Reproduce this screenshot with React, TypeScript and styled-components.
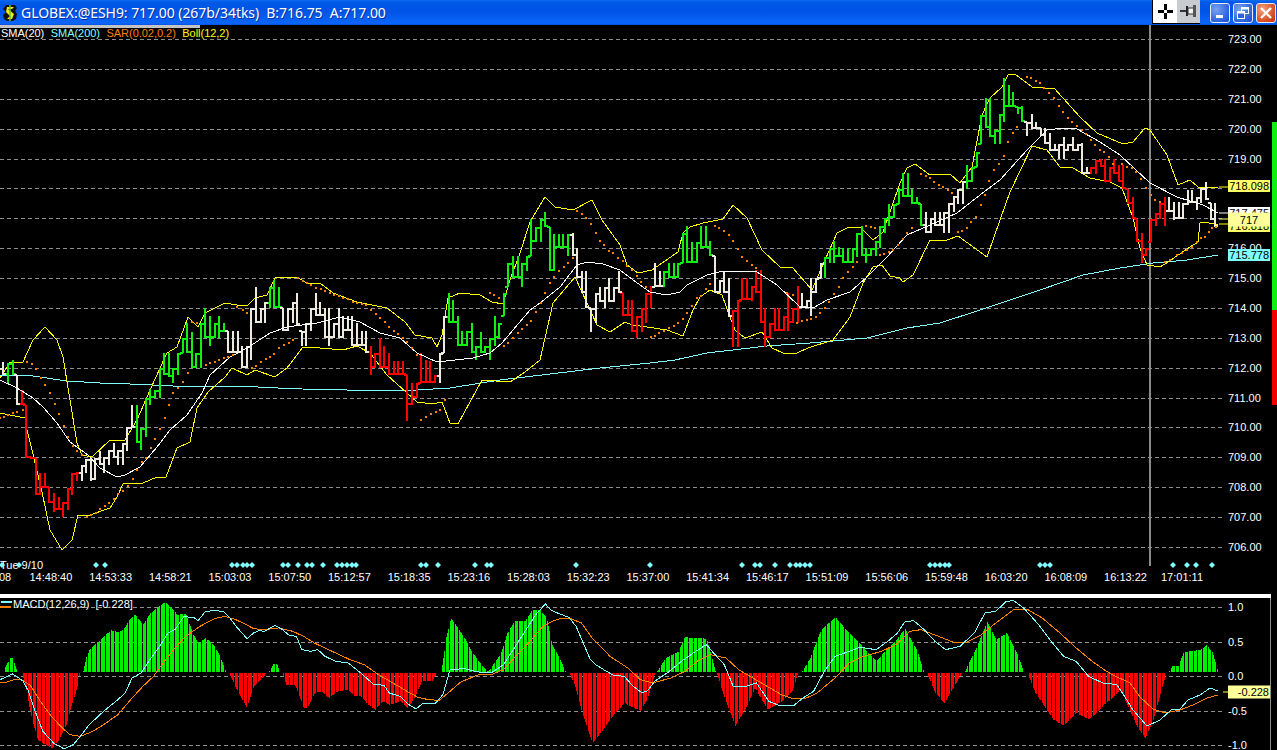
// App.tsx
import React from 'react';
import styled, { createGlobalStyle } from 'styled-components';

const GlobalStyle = createGlobalStyle`
    html, body {
        margin: 0;
        padding: 0;
        background: #000;
    }
    body {
        font-family: "Liberation Sans", Arial, sans-serif;
    }
`;

const Window = styled.div`
    width: 1277px;
    height: 750px;
    display: flex;
    flex-direction: column;
    overflow: hidden;
    background: #000;
`;

const TitleBar = styled.div`
    height: 25px;
    flex: none;
    display: flex;
    align-items: center;
    padding: 0 1px 0 3px;
    box-sizing: border-box;
    background: linear-gradient(#0a6cf0 0%, #0058e6 10%, #0054e8 45%, #0a64f8 88%, #0a66ff 93%, #0052e0 100%);
`;

const TitleText = styled.div`
    margin-left: 3px;
    flex: 1;
    color: #fff;
    font-family: "Noto Sans", sans-serif;
    font-size: 14px;
    letter-spacing: -0.05px;
    white-space: pre;
    text-shadow: 1px 1px 0 #0a2fa0;
`;

const ToolButton = styled.div<{ $on?: boolean }>`
    width: ${p => (p.$on ? 25 : 23)}px;
    height: 24px;
    align-self: flex-start;
    display: flex;
    align-items: center;
    justify-content: center;
    box-sizing: border-box;
    background: ${p => (p.$on ? '#fff' : '#c8ccd0')};
    border-left: ${p => (p.$on ? '1px solid #000' : 'none')};
    border-bottom: 1px solid #000;
`;

const WinButtons = styled.div`
    margin-left: 10px;
    display: flex;
    gap: 3px;
`;

const WinButton = styled.div<{ $close?: boolean }>`
    width: 20px;
    height: 20px;
    display: flex;
    align-items: center;
    justify-content: center;
    box-sizing: border-box;
    border: 1px solid #e8eefc;
    border-radius: 3px;
    background: ${p =>
        p.$close
            ? 'radial-gradient(circle at 30% 30%, #f0a080, #d84a20 70%, #c03010)'
            : 'radial-gradient(circle at 30% 30%, #7aa2f0, #2a62e0 70%, #1c48c8)'};
`;

const Pane = styled.div<{ $h: number }>`
    position: relative;
    height: ${p => p.$h}px;
    flex: none;
`;

const Sliver = styled.div`
    position: absolute;
    left: 0;
    top: 0;
    width: 200px;
    height: 3px;
    background: #c4c4c4;
`;

const Legend = styled.div`
    position: absolute;
    left: 1px;
    top: 1px;
    display: flex;
    gap: 6.5px;
    font-size: 11px;
    line-height: 14px;
    letter-spacing: -0.03px;
    white-space: pre;
`;

const LegendItem = styled.span<{ $color: string }>`
    color: ${p => p.$color};
`;

const MacdLegend = styled.div`
    position: absolute;
    left: 0;
    top: -1px;
    display: flex;
    align-items: center;
    gap: 1px;
    font-size: 11px;
    line-height: 14px;
    color: #fff;
    white-space: pre;
`;

const Separator = styled.div`
    height: 4px;
    flex: none;
    margin-right: 6px;
    background: #fff;
`;

const Chart = styled.svg`
    display: block;
    position: absolute;
    left: 0;
    top: 0;
`;

const AxisText = styled.text<{ $fill?: string }>`
    font-family: "Liberation Sans", Arial, sans-serif;
    font-size: 11px;
    fill: ${p => p.$fill || '#fff'};
`;

const priceY = (p: number) => 39 + (723 - p) * 29.88;
const barX = (i: number) => Math.round(-1.1 + 4.59 * i);

type Tone = 'red' | 'green' | 'white';

const toneColor: Record<Tone, string> = {
    red: '#ff0000',
    green: '#10f010',
    white: '#eeeadf',
};

// runs of high/low pixel pairs, one pair per bar
const barRuns: [Tone, string][] = [
    ['red', '368,398'],
    ['white', '362,375'],
    ['green', '363,383 360,375'],
    ['white', '375,405'],
    ['red', '390,405 405,458 457,459 458,495 473,495 473,488 487,503 493,512 497,510 502,517 488,510 473,495 472,481'],
    ['white', '465,481 459,473 458,481 458,480 451,465 457,473 450,465 443,458 450,465 443,465 427,451 405,428'],
    ['green', '405,443 428,450 398,437 389,405 390,398 368,398 353,375 353,377 368,383 353,375 338,353 323,353 332,368 353,368 323,368 308,338 316,346 323,338 316,338 323,332'],
    ['white', '331,353 331,353 331,353 346,368 346,368 308,360 287,323 308,323 302,323'],
    ['green', '287,308 280,308 287,308'],
    ['white', '308,331 308,331 302,323 293,325 331,346 323,346 308,331 293,316 302,316 308,338 308,346 323,338 308,338 316,338 316,331 316,346 323,346 331,346 331,353'],
    ['red', '346,375 353,368 338,368 346,368 353,375 361,375 361,375 361,375 375,421 383,405 383,398 353,383 360,383 361,383 375,383'],
    ['white', '353,383 316,353'],
    ['green', '293,323 300,323 316,346 331,346 331,346 323,353 346,360 332,353 346,353 338,360 316,346 323,338 293,316 263,287 256,278 256,278 263,287 256,271 219,256 227,242 219,242 212,227 227,271 234,271 234,248 234,248 234,256'],
    ['white', '233,256 248,278 271,293 271,308 308,332 293,323 287,302 287,308 278,302 287,302 271,293'],
    ['red', '293,316 300,316 300,332 316,338 308,332 293,323 286,308'],
    ['white', '263,287 271,287'],
    ['green', '271,287 263,278 263,278 263,278 233,263 226,263 242,263 242,263 226,248 226,248 241,256'],
    ['white', '256,293 280,293 271,293 278,317'],
    ['red', '310,347 300,347 278,300 278,300 286,301 270,293 270,323 308,347 323,338 308,331 308,331 316,331 293,331 308,323 286,323'],
    ['white', '293,308 300,308 278,316 278,293 263,278'],
    ['green', '257,278 248,263 241,263 247,257 248,263 248,263 248,263 233,257 226,256 248,263 248,256 241,256 226,248 218,233 204,226 204,218 189,204 173,197 173,197 189,204 197,204 204,226'],
    ['white', '212,233 218,233 212,226 212,226 212,233 203,233 196,212 189,204 181,204'],
    ['green', '165,189 167,182 152,167 115,144 98,128 98,137 130,144 114,144 78,122 85,107 92,107 107,114 106,122'],
    ['white', '122,136 114,129 122,129 128,136 128,144 133,151 144,151 144,159 137,159 144,151 137,151 144,151 143,174 167,174'],
    ['red', '167,174 160,174 159,167 159,182 167,182 159,174 165,182 165,189 189,204 197,219 219,242 233,263 248,256 219,242 213,226 203,219 197,226'],
    ['white', '197,212 202,220 202,219 203,219 190,205 190,203 197,210 188,203 182,200 203,220 203,227'],
];

const bars = barRuns.flatMap(([tone, list]) =>
    list.split(' ').map(pair => {
        const [top, bottom] = pair.split(',').map(Number);
        return { tone, top, bottom };
    })
);

// close sits where this bar overlaps the next one, open is the previous close
const closes = bars.map((b, i) => {
    const next = bars[i + 1] || b;
    const lo = Math.max(b.top, next.top);
    const hi = Math.min(b.bottom, next.bottom);
    if (lo <= hi) return Math.round(next.top < b.top ? lo + 1 : hi - 1);
    return next.top > b.bottom ? b.bottom - 1 : b.top + 1;
});

const barPath = (tone: Tone) =>
    bars
        .map((b, i) => {
            if (b.tone !== tone) return '';
            const x = barX(i);
            const open = i > 0 ? Math.min(Math.max(closes[i - 1], b.top), b.bottom) : b.top;
            return `M${x} ${b.top}V${b.bottom}M${x - 3} ${open}H${x}M${x} ${closes[i]}H${x + 3}`;
        })
        .join('');

const sma200 = '0,375 33,376 67,381 100,383 130,384 173,386 237,386 278,388 302,389 347,390 417,390 450,388 500,380 550,374 600,368 650,363 675,360 707,353 767,346 810,343 867,338 907,328 940,323 980,310 1040,290 1083,275 1120,268 1153,263 1187,260 1218,255';

const sma20 = '0,380 17,388 33,398 43,407 57,423 70,442 88,455 100,468 117,477 125,475 140,467 157,447 170,430 187,415 202,393 210,375 230,357 247,348 270,333 287,327 317,323 340,317 360,322 380,333 400,338 417,353 437,362 473,358 490,353 502,343 530,310 540,303 560,287 577,265 587,262 603,264 620,270 633,280 650,292 667,295 680,292 687,285 707,275 723,271 757,272 777,285 800,307 813,308 827,300 850,292 867,277 887,257 907,235 930,225 957,213 980,195 1000,180 1027,150 1047,130 1063,128 1077,129 1100,142 1120,155 1150,183 1177,197 1203,205 1218,213';

const bollUpper = '0,378 10,362 23,362 33,340 45,327 57,340 63,357 77,443 82,455 92,457 110,440 125,440 137,420 147,397 160,368 167,353 177,347 188,317 198,327 205,313 225,303 237,305 248,305 255,298 267,295 275,278 280,277 297,277 307,283 320,283 333,293 357,302 387,308 405,322 415,335 432,338 437,347 442,335 448,298 460,293 480,295 492,302 503,304 510,280 520,253 530,222 545,197 555,207 573,210 592,200 602,220 620,245 627,265 638,273 652,270 678,252 683,233 690,227 703,223 723,219 733,205 747,218 762,250 780,267 792,267 812,290 825,260 837,233 847,228 860,227 873,240 883,232 900,183 907,168 915,164 930,175 950,174 960,183 972,167 982,115 990,98 1002,87 1008,75 1015,74 1032,87 1043,88 1054,88 1080,117 1097,133 1123,144 1133,142 1145,128 1150,130 1167,155 1178,185 1190,180 1198,187 1218,187';

const bollLower = '0,413 25,418 27,430 32,450 42,492 50,530 62,550 72,540 78,515 90,515 110,508 117,497 123,484 143,483 157,477 166,477 177,448 190,442 197,408 208,392 225,377 232,368 247,375 255,370 275,377 287,368 303,347 320,348 343,350 357,346 370,353 387,375 407,393 417,402 432,404 442,402 450,423 458,424 470,402 482,380 510,382 525,372 540,360 553,303 575,277 587,303 597,325 610,332 625,322 632,325 647,327 667,330 683,336 693,310 700,297 710,290 722,295 730,317 735,330 745,338 762,332 772,348 783,353 797,353 808,348 833,340 850,317 863,283 873,267 882,265 890,276 900,278 903,282 913,275 930,240 947,240 958,236 987,257 1000,220 1010,192 1032,146 1047,150 1060,167 1073,168 1090,178 1110,182 1122,188 1133,218 1140,248 1147,265 1160,267 1168,262 1190,247 1198,242 1200,223 1205,222 1218,225';

const sarDots = '0,418 4,417 8,415 13,413 17,412 23,410 27,362 32,364 36,369 41,378 45,385 50,393 55,404 59,414 64,426 68,437 73,446 77,451 82,455 87,517 91,515 96,513 100,509 105,506 109,503 114,499 118,494 123,491 128,486 133,479 137,470 142,462 146,458 151,448 155,439 160,429 165,418 169,405 173,393 178,388 183,382 188,373 192,322 197,323 206,365 210,363 215,362 219,360 224,358 228,357 233,355 237,307 243,310 247,313 252,368 256,366 261,362 266,359 270,357 274,354 279,348 284,345 289,343 293,340 298,278 303,281 307,283 311,285 316,288 321,289 325,291 330,293 334,295 339,296 343,298 348,299 353,302 357,303 362,304 366,305 371,310 376,314 380,318 385,322 389,327 394,331 398,334 403,338 407,342 412,348 417,355 421,420 426,417 431,414 436,412 440,410 445,400 490,293 494,295 499,298 504,346 508,343 513,338 518,333 522,329 527,325 531,321 536,312 541,303 545,293 550,283 554,277 559,271 564,267 568,263 573,258 577,211 582,214 586,218 591,224 596,233 600,241 604,245 609,251 613,253 618,258 623,261 627,266 632,270 637,276 641,282 646,287 651,337 655,336 659,333 664,331 669,328 674,326 678,323 683,319 687,313 692,306 697,298 701,296 706,289 710,284 715,226 719,228 724,231 729,235 733,241 738,249 742,257 747,261 752,265 756,268 787,293 793,295 797,323 802,321 807,320 811,319 816,317 820,313 825,308 829,302 834,294 839,287 843,278 848,272 853,267 857,262 866,226 871,227 875,228 880,255 884,254 889,252 893,250 898,245 903,239 907,233 912,228 921,174 926,176 930,178 934,182 939,185 943,187 948,190 952,193 958,232 962,231 967,228 971,222 976,217 981,205 985,195 989,181 994,170 999,164 1004,156 1008,142 1013,133 1017,127 1027,77 1031,78 1036,81 1040,83 1044,88 1049,93 1054,98 1059,106 1063,112 1068,118 1072,122 1077,126 1082,130 1086,134 1091,140 1095,145 1100,150 1104,152 1109,157 1113,164 1122,164 1127,167 1132,168 1136,172 1141,179 1146,188 1151,195 1155,200 1160,202 1165,262 1170,260 1177,255 1182,253 1187,250 1192,247 1197,242 1201,238 1205,237 1209,232 1212,228 1216,227'
    .split(' ')
    .map(p => p.split(',').map(Number));

const diamonds = [2, 19, 96, 105, 232, 237, 243, 247, 252, 283, 288, 298, 307, 312, 323, 337, 342, 347, 352, 356, 421, 426, 438, 475, 487, 491, 576, 650, 742, 755, 760, 775, 790, 796, 800, 805, 810, 930, 935, 940, 945, 949, 1040, 1045, 1050, 1173, 1187, 1196, 1212];

const timeLabels = ['14:48:40', '14:53:33', '14:58:21', '15:03:03', '15:07:50', '15:12:57', '15:18:35', '15:23:16', '15:28:03', '15:32:23', '15:37:00', '15:41:34', '15:46:17', '15:51:09', '15:56:06', '15:59:48', '16:03:20', '16:08:09', '16:13:22'];

const prices = Array.from({ length: 18 }, (_, i) => 723 - i);
const hiddenPrices = [718, 717];

// MACD traces were read off crops of 560px wide, hence the scale
const crop = (list: string, originX: number) =>
    list.split(' ').map(p => {
        const [x, y] = p.split(',').map(Number);
        return [originX + x / 2.8, 598 + y / 3];
    });

const toPoints = (pts: number[][]) => pts.map(p => p.join(',')).join(' ');

const macdLine = toPoints([
    ...crop('0,245 15,238 35,228 50,238 65,250 80,280 95,330 120,400 150,435 180,453 205,440 225,415 250,380 290,340 330,305 350,285 370,240 395,225 420,185 450,140 470,105 490,95 515,55 545,60 555,68 575,40 600,38 625,40 640,55 665,90 692,122 710,105 725,98 740,100 770,82 785,90 810,112 830,115 845,155 870,160 890,155 910,175 940,190 975,195 1010,225 1045,258 1075,262 1090,285 1120,295 1145,320 1165,333 1185,315 1220,315 1240,290 1260,215 1300,212 1340,222 1375,225 1410,200 1440,150 1470,100 1500,50 1527,18 1545,38', 0),
    ...crop('0,48 25,58 45,85 65,135 85,185 100,200 130,220 150,232 180,235 205,265 230,285 245,278 265,250 300,225 340,190 380,160 410,140 430,165 460,200 485,265 520,265 550,255 585,310 615,323 655,322 680,300 710,280 740,220 770,175 810,160 840,148 885,155 920,128 945,105 965,72 990,68 1020,95 1050,130 1080,155 1120,145 1160,105 1190,45 1220,40 1250,10 1270,8 1300,32 1340,80 1375,130 1410,175 1445,190 1480,235 1520,255', 560),
    [1107, 683], [1117, 685], [1125, 697], [1133, 710], [1147, 726], [1160, 720], [1172, 709], [1180, 709], [1188, 700], [1200, 695], [1210, 688], [1218, 691],
]);

const signalLine = toPoints([
    ...crop('0,255 20,252 40,245 60,245 85,262 110,305 140,350 170,385 195,410 225,415 260,400 290,380 330,350 370,300 400,265 430,235 460,190 490,150 520,115 560,85 600,62 630,55 660,65 690,80 710,92 740,95 780,90 820,100 850,115 880,135 920,155 980,185 1020,200 1060,230 1100,255 1140,280 1170,298 1200,305 1230,307 1260,280 1290,252 1340,230 1380,228 1410,215 1440,180 1480,135 1520,85 1550,68', 0),
    ...crop('0,62 30,62 60,75 90,120 140,175 190,210 225,245 260,255 310,240 350,220 390,185 420,170 465,180 500,215 540,240 580,265 620,290 655,303 690,300 720,285 770,240 810,195 850,175 900,160 940,140 980,100 1010,95 1060,115 1100,132 1140,132 1180,110 1220,75 1270,35 1310,35 1350,60 1400,105 1440,145 1490,190 1530,220', 560),
    [1113, 675], [1130, 683], [1140, 697], [1153, 709], [1165, 713], [1180, 710], [1193, 705], [1207, 698], [1218, 695],
]);

const histSegments: [Tone, number[][]][] = [
    ['green', crop('8,222 15,205 28,180 35,180 48,222', 0)],
    ['red', crop('60,225 70,260 80,320 90,370 105,425 125,440 145,450 165,425 185,380 200,320 215,270 222,230', 0)],
    ['green', crop('232,222 240,180 250,155 270,135 290,115 310,97 330,102 345,95 365,60 378,50 390,68 400,80 420,45 445,25 462,12 480,30 495,50 520,48 540,110 555,135 575,120 600,145 615,175 632,222', 0)],
    ['red', crop('640,225 660,270 690,330 710,265 730,245 745,225', 0)],
    ['green', crop('752,222 765,198 775,198 782,222', 0)],
    ['red', crop('790,225 800,260 825,260 850,330 860,330 880,285 900,280 920,300 945,280 975,275 990,295 1010,295 1030,320 1050,335 1070,310 1090,320 1120,310 1140,330 1160,300 1180,250 1210,248 1222,225', 0)],
    ['green', [...crop('1235,222 1248,120 1262,62 1275,80 1300,120 1320,160 1350,205 1365,222 1380,200 1400,170 1420,105 1440,70 1470,68 1490,35 1510,35 1530,60 1545,140', 0), ...crop('0,185 15,222', 560)]],
    ['red', crop('25,225 40,260 60,340 90,435 120,395 150,350 180,315 195,325 225,338 245,300 265,225', 560)],
    ['green', crop('270,222 295,180 330,162 348,118 410,122 435,222', 560)],
    ['red', crop('438,225 460,300 490,383 520,330 545,270 580,335 620,310 650,280 665,225', 560)],
    ['green', crop('676,222 700,180 730,95 770,58 800,95 850,150 885,190 905,165 945,120 965,92 1000,160 1018,222', 560)],
    ['red', crop('1026,225 1050,285 1075,315 1100,270 1125,225', 560)],
    ['green', crop('1132,222 1165,150 1195,72 1220,125 1250,105 1280,170 1298,222', 560)],
    ['red', [...crop('1308,225 1330,285 1380,365 1410,383 1445,345 1480,365 1520,325', 560), [1100, 707], [1110, 700], [1120, 690], [1128, 707], [1137, 727], [1145, 738], [1153, 720], [1162, 687], [1166, 673]]],
    ['green', [[1168, 672], [1172, 666], [1178, 666], [1183, 653], [1190, 651], [1200, 650], [1206, 645], [1212, 652], [1218, 672]]],
];

const histPath = (tone: Tone) =>
    histSegments
        .filter(s => s[0] === tone)
        .map(([, pts]) => {
            let d = '';
            const base = tone === 'green' ? 672 : 673;
            for (let x = Math.ceil(pts[0][0]); x <= pts[pts.length - 1][0]; x++) {
                // every bar has a dark gap to the next one
                if (Math.floor(x / 4.59) !== Math.floor((x + 1) / 4.59)) continue;
                const k = pts.findIndex(p => p[0] >= x);
                const a = pts[Math.max(k - 1, 0)];
                const b = pts[k];
                const t = b[0] === a[0] ? 0 : (x - a[0]) / (b[0] - a[0]);
                const y = Math.round(a[1] + (b[1] - a[1]) * t);
                d += `M${x + 0.5} ${base}V${y}`;
            }
            return d;
        })
        .join('');

const macdLevels: [string, number][] = [['1.0', 607], ['0.5', 642], ['0.0', 676], ['-0.5', 711], ['-1.0', 745]];

const PriceTag: React.FC<{ y: number; h?: number; bg: string; label: string; color?: string; center?: boolean }> = ({ y, h = 12, bg, label, color = '#000', center }) => (
    <>
        <rect x={1228} y={y - h / 2} width={42} height={h} fill={bg} />
        <AxisText x={center ? 1249 : 1269} y={y + 4} textAnchor={center ? 'middle' : 'end'} $fill={color}>
            {label}
        </AxisText>
    </>
);

const AppIcon = () => (
    <svg width="15" height="18" viewBox="0 0 15 18">
        <path d="M3 1h9l2 3-2 3 2 3-1 5-3 2H4L1 15l-1-4 3-3-3-3z" fill="#111" />
        <path d="M4 3h7L9 5H5l6 5-2 5H4l2-2h2L3 8z" fill="#f4e820" />
        <path d="M7 1v16" stroke="#5ec83a" strokeWidth="1.5" />
    </svg>
);

const CrossIcon = () => (
    <svg width="15" height="15" viewBox="0 0 15 15" fill="#000">
        <rect x="6" y="0" width="3" height="6" />
        <rect x="6" y="9" width="3" height="6" />
        <rect x="0" y="6" width="6" height="3" />
        <rect x="9" y="6" width="6" height="3" />
    </svg>
);

const PinIcon = () => (
    <svg width="17" height="15" viewBox="0 0 17 15">
        <path d="M0 7h6" stroke="#333" strokeWidth="2" />
        <rect x="6" y="2" width="2" height="10" fill="#222" />
        <rect x="8" y="4" width="6" height="6" fill="#f2f2f2" stroke="#333" />
        <rect x="13" y="1" width="3" height="12" fill="#555" />
    </svg>
);

const MinIcon = () => (
    <svg width="12" height="12" viewBox="0 0 12 12">
        <rect x="2" y="8" width="7" height="3" fill="#fff" />
    </svg>
);

const RestoreIcon = () => (
    <svg width="14" height="14" viewBox="0 0 14 14" fill="none" stroke="#fff">
        <rect x="5.5" y="1.5" width="7" height="6" />
        <path d="M5 2.5h8" strokeWidth="2" />
        <rect x="1.5" y="5.5" width="7" height="7" fill="#2a62e0" />
        <path d="M1 6.5h8" strokeWidth="2" />
    </svg>
);

const CloseIcon = () => (
    <svg width="14" height="14" viewBox="0 0 14 14" stroke="#fff" strokeWidth="2.4">
        <path d="M2 2l10 10M12 2L2 12" />
    </svg>
);

const PriceChart = () => (
    <Chart width={1277} height={569} viewBox="0 25 1277 569">
        {prices.map(p => (
            <line key={p} x1={0} x2={1224} y1={Math.round(priceY(p)) + 0.5} y2={Math.round(priceY(p)) + 0.5} stroke="#909090" strokeDasharray="4 3" />
        ))}
        <rect x={1149} y={25} width={2} height={541} fill="#8a8a8a" />
        {prices
            .filter(p => !hiddenPrices.includes(p))
            .map(p => (
                <AxisText key={p} x={1228} y={priceY(p) + 4}>
                    {p}.00
                </AxisText>
            ))}
        <polyline points={sma200} fill="none" stroke="#80ffff" shapeRendering="crispEdges" />
        <polyline points={bollUpper} fill="none" stroke="#ffff00" shapeRendering="crispEdges" />
        <polyline points={bollLower} fill="none" stroke="#ffff00" shapeRendering="crispEdges" />
        {(['green', 'red', 'white'] as Tone[]).map(t => (
            <path key={t} d={barPath(t)} fill="none" stroke={toneColor[t]} strokeWidth="2" shapeRendering="crispEdges" />
        ))}
        <polyline points={sma20} fill="none" stroke="#ffffff" shapeRendering="crispEdges" />
        {sarDots.map(([x, y]) => (
            <rect key={`${x}-${y}`} x={x - 1} y={y - 1} width={2} height={2} fill="#ff7f00" />
        ))}
        <line x1={1219} x2={1228} y1={187} y2={187} stroke="#ffff00" />
        <line x1={1219} x2={1228} y1={213} y2={213} stroke="#fff" />
        <line x1={1219} x2={1228} y1={219} y2={219} stroke="#ffff80" />
        <line x1={1219} x2={1228} y1={224} y2={224} stroke="#ffff00" />
        <PriceTag y={186} bg="#ffff66" label="718.098" />
        <PriceTag y={213} bg="#fff" label="717.475" />
        <PriceTag y={226} bg="#ffff66" label="716.818" />
        <PriceTag y={219.5} h={14} bg="#ffff99" label="717" center />
        <PriceTag y={255} bg="#80ffff" label="715.778" />
        <rect x={1272} y={122} width={5} height={188} fill="#10f010" />
        <rect x={1272} y={310} width={5} height={95} fill="#f00000" />
        <AxisText x={0} y={569}>Tue 9/10</AxisText>
        {diamonds.map(x => (
            <path key={x} d={`M${x - 3} 565l3-3 3 3-3 3z`} fill="#80ffff" />
        ))}
        <AxisText x={-1} y={581}>08</AxisText>
        {timeLabels.map((t, i) => (
            <AxisText key={t} x={29.5 + i * 59.7} y={581}>{t}</AxisText>
        ))}
        <AxisText x={1161} y={581}>17:01:11</AxisText>
    </Chart>
);

const MacdChart = () => (
    <Chart width={1277} height={152} viewBox="0 598 1277 152">
        {macdLevels.map(([label, y]) => (
            <React.Fragment key={label}>
                <line x1={0} x2={1224} y1={y + 0.5} y2={y + 0.5} stroke="#909090" strokeDasharray="4 3" />
                <AxisText x={1228} y={y + 4}>{label}</AxisText>
            </React.Fragment>
        ))}
        <path d={histPath('green')} fill="none" stroke="#00f000" shapeRendering="crispEdges" />
        <path d={histPath('red')} fill="none" stroke="#ff0000" shapeRendering="crispEdges" />
        <polyline points={signalLine} fill="none" stroke="#ff7f00" shapeRendering="crispEdges" />
        <polyline points={macdLine} fill="none" stroke="#80ffff" shapeRendering="crispEdges" />
        <line x1={1223} x2={1228} y1={692} y2={692} stroke="#ffff66" />
        <PriceTag y={692} h={13} bg="#ffff99" label="-0.228" />
        <rect x={1270} y={598} width={1} height={152} fill="#909090" />
    </Chart>
);

const LegendSwatch = () => (
    <svg width="12" height="9" viewBox="0 0 12 9">
        <rect x="1" y="1" width="11" height="2" fill="#80ffff" />
        <rect x="0" y="6" width="11" height="2" fill="#ff7f00" />
    </svg>
);

const App: React.FC = () => {
    return (
        <Window>
            <GlobalStyle />
            <TitleBar>
                <AppIcon />
                <TitleText>GLOBEX:@ESH9: 717.00 (267b/34tks)  B:716.75  A:717.00</TitleText>
                <ToolButton $on>
                    <CrossIcon />
                </ToolButton>
                <ToolButton>
                    <PinIcon />
                </ToolButton>
                <WinButtons>
                    <WinButton><MinIcon /></WinButton>
                    <WinButton><RestoreIcon /></WinButton>
                    <WinButton $close><CloseIcon /></WinButton>
                </WinButtons>
            </TitleBar>
            <Pane $h={569}>
                <PriceChart />
                <Sliver />
                <Legend>
                    <LegendItem $color="#ffffff">SMA(20)</LegendItem>
                    <LegendItem $color="#80ffff">SMA(200)</LegendItem>
                    <LegendItem $color="#ff7f00">SAR(0.02,0.2)</LegendItem>
                    <LegendItem $color="#ffff00">Boll(12,2)</LegendItem>
                </Legend>
            </Pane>
            <Separator />
            <Pane $h={152}>
                <MacdChart />
                <MacdLegend>
                    <LegendSwatch />
                    MACD(12,26,9)  [-0.228]
                </MacdLegend>
            </Pane>
        </Window>
    );
};

export default App;
